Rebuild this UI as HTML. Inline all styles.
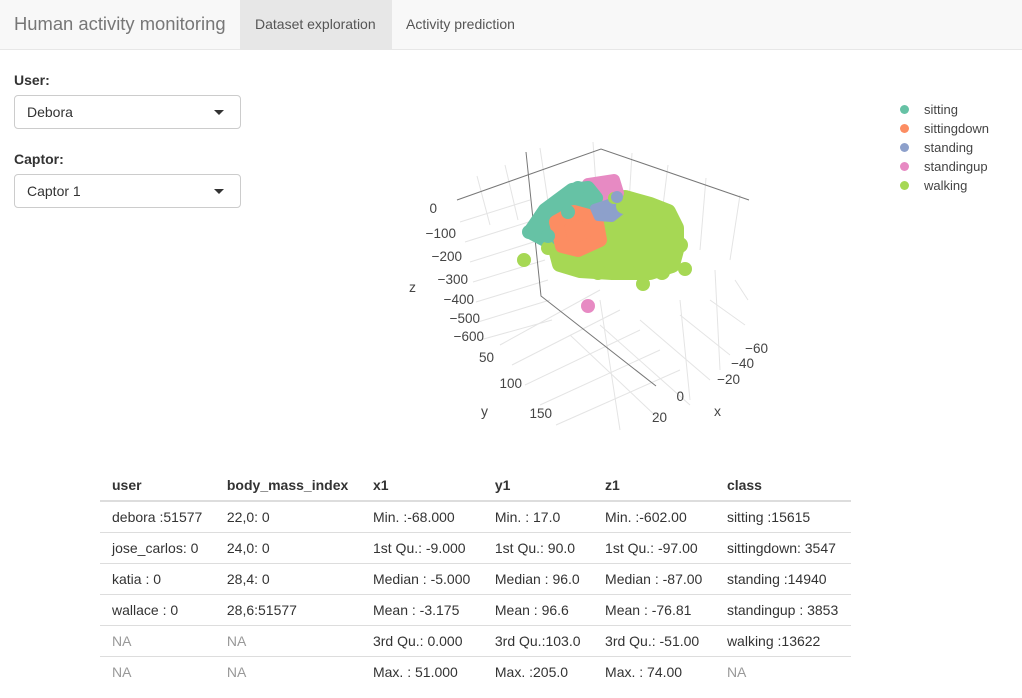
<!DOCTYPE html>
<html><head><meta charset="utf-8"><style>
body{margin:0;width:1022px;height:698px;overflow:hidden;background:#fff;font-family:"Liberation Sans",Helvetica,sans-serif;color:#333;font-size:14px;position:relative}
.nav{position:absolute;left:0;top:0;width:1022px;height:49px;background:#f8f8f8;border-bottom:1px solid #e7e7e7}
.brand{position:absolute;left:14px;top:13px;font-size:18.4px;color:#777}
.tab{position:absolute;top:0;height:49px;line-height:49px;font-size:14px;color:#555;padding:0 15px}
.lbl{position:absolute;left:14px;font-weight:bold;font-size:14px}
.sel{position:absolute;left:14px;width:227px;height:34px;border:1px solid #ccc;border-radius:4px;box-sizing:border-box}
.sel span{position:absolute;left:12px;top:8px}
.sel i{position:absolute;right:16px;top:14px;border-left:5px solid transparent;border-right:5px solid transparent;border-top:5px solid #333}
table{position:absolute;left:100px;top:470px;border-collapse:collapse;width:751px}
th{text-align:left;font-weight:bold;height:30px;padding:0 12px;border-bottom:2px solid #ddd}
td{height:30px;padding:0 12px;border-top:1px solid #ddd}
.na{color:#999}
.leg{position:absolute;left:900px;font-size:13px;color:#444}
.leg b{position:absolute;left:0;top:3px;width:9px;height:9px;border-radius:50%}
.leg span{position:absolute;left:24px;top:0;white-space:nowrap}
</style></head><body>
<div class="nav"><div class="brand">Human activity monitoring</div>
<div class="tab" style="left:240px;background:#e7e7e7;width:122px">Dataset exploration</div>
<div class="tab" style="left:391px">Activity prediction</div></div>
<div class="lbl" style="top:72px">User:</div>
<div class="sel" style="top:95px"><span>Debora</span><i></i></div>
<div class="lbl" style="top:151px">Captor:</div>
<div class="sel" style="top:174px"><span>Captor 1</span><i></i></div>

<div class="leg" style="top:102px"><b style="background:#66c2a5"></b><span>sitting</span></div>
<div class="leg" style="top:121px"><b style="background:#fc8d62"></b><span>sittingdown</span></div>
<div class="leg" style="top:140px"><b style="background:#8da0cb"></b><span>standing</span></div>
<div class="leg" style="top:159px"><b style="background:#e78ac3"></b><span>standingup</span></div>
<div class="leg" style="top:178px"><b style="background:#a6d854"></b><span>walking</span></div>

<svg style="position:absolute;left:0;top:0" width="1022" height="470">
<g stroke="#e4e4e4" stroke-width="1" fill="none">
<path d="M477 176L490 225 M505 165L518 220 M540 148L550 215 M593 142L598 215 M632 153L628 220 M668 165L660 230 M706 178L700 250 M740 195L730 260"/>
<path d="M460 222L530 200 M465 242L535 220 M470 262L540 240 M473 282L545 260 M476 302L548 280 M478 322L550 300 M480 340L552 320"/>
<path d="M500 345L600 290 M512 365L620 310 M525 385L640 330 M540 405L660 350 M556 425L680 370"/>
<path d="M570 335L660 420 M600 325L690 405 M640 320L710 380 M680 315L730 355 M710 300L745 325 M735 280L748 300"/>
<path d="M600 300L620 430 M680 300L690 400 M715 270L720 370"/>
</g>
<g stroke="#777" stroke-width="1" fill="none">
<path d="M457 200L601 149L749 200 M526 152L541 296L656 386"/>
</g>
<g stroke-linejoin="round">
<polygon fill="#a6d854" stroke="#a6d854" stroke-width="16" points="555,245 575,225 600,205 625,198 650,205 668,212 676,228 676,250 672,265 650,272 612,272 580,270 560,264"/>
<polygon fill="#e78ac3" stroke="#e78ac3" stroke-width="12" points="588,184 614,180 618,193 600,198 590,194"/>
<polygon fill="#66c2a5" stroke="#66c2a5" stroke-width="14" points="530,232 545,210 572,190 588,188 596,198 585,218 565,232 545,240"/>
<polygon fill="#fc8d62" stroke="#fc8d62" stroke-width="14" points="556,222 574,212 596,218 600,240 578,250 562,246"/>
<polygon fill="#8da0cb" stroke="#8da0cb" stroke-width="8" points="594,208 612,202 622,210 612,218 598,217"/>
</g>
<g fill="#a6d854"><circle cx="658" cy="210" r="8"/><circle cx="672" cy="222" r="8"/><circle cx="680" cy="245" r="8"/><circle cx="662" cy="272" r="8"/><circle cx="628" cy="272" r="8"/><circle cx="598" cy="272" r="8"/><circle cx="568" cy="266" r="8"/><circle cx="548" cy="248" r="7"/><circle cx="614" cy="198" r="6"/><circle cx="624" cy="206" r="8"/></g>
<circle cx="524" cy="260" r="7" fill="#a6d854"/><circle cx="685" cy="269" r="7" fill="#a6d854"/><circle cx="643" cy="278" r="6" fill="#a6d854"/><circle cx="643" cy="284" r="7" fill="#a6d854"/>
<circle cx="588" cy="306" r="7" fill="#e78ac3"/><circle cx="617" cy="197" r="6" fill="#8da0cb"/>
<g fill="#66c2a5"><circle cx="578" cy="188" r="7"/><circle cx="529" cy="232" r="7"/><circle cx="548" cy="236" r="7"/><circle cx="568" cy="212" r="7"/></g>
<g font-size="13.5" fill="#444" text-anchor="end">
<text x="437" y="213">0</text><text x="456" y="238">−100</text><text x="462" y="261">−200</text><text x="468" y="284">−300</text><text x="474" y="304">−400</text><text x="480" y="323">−500</text><text x="484" y="341">−600</text>
<text x="494" y="362">50</text><text x="522" y="388">100</text><text x="552" y="418">150</text>
<text x="768" y="353">−60</text><text x="754" y="368">−40</text><text x="740" y="384">−20</text><text x="684" y="401">0</text><text x="667" y="422">20</text>
</g>
<text x="409" y="292" font-size="14" fill="#444">z</text>
<text x="481" y="416" font-size="14" fill="#444">y</text>
<text x="714" y="416" font-size="14" fill="#444">x</text>
</svg>

<table>
<tr><th>user</th><th>body_mass_index</th><th>x1</th><th>y1</th><th>z1</th><th>class</th></tr>
<tr><td>debora :51577</td><td>22,0: 0</td><td>Min. :-68.000</td><td>Min. : 17.0</td><td>Min. :-602.00</td><td>sitting :15615</td></tr>
<tr><td>jose_carlos: 0</td><td>24,0: 0</td><td>1st Qu.: -9.000</td><td>1st Qu.: 90.0</td><td>1st Qu.: -97.00</td><td>sittingdown: 3547</td></tr>
<tr><td>katia : 0</td><td>28,4: 0</td><td>Median : -5.000</td><td>Median : 96.0</td><td>Median : -87.00</td><td>standing :14940</td></tr>
<tr><td>wallace : 0</td><td>28,6:51577</td><td>Mean : -3.175</td><td>Mean : 96.6</td><td>Mean : -76.81</td><td>standingup : 3853</td></tr>
<tr><td class="na">NA</td><td class="na">NA</td><td>3rd Qu.: 0.000</td><td>3rd Qu.:103.0</td><td>3rd Qu.: -51.00</td><td>walking :13622</td></tr>
<tr><td class="na">NA</td><td class="na">NA</td><td>Max. : 51.000</td><td>Max. :205.0</td><td>Max. : 74.00</td><td class="na">NA</td></tr>
</table>
</body></html>
